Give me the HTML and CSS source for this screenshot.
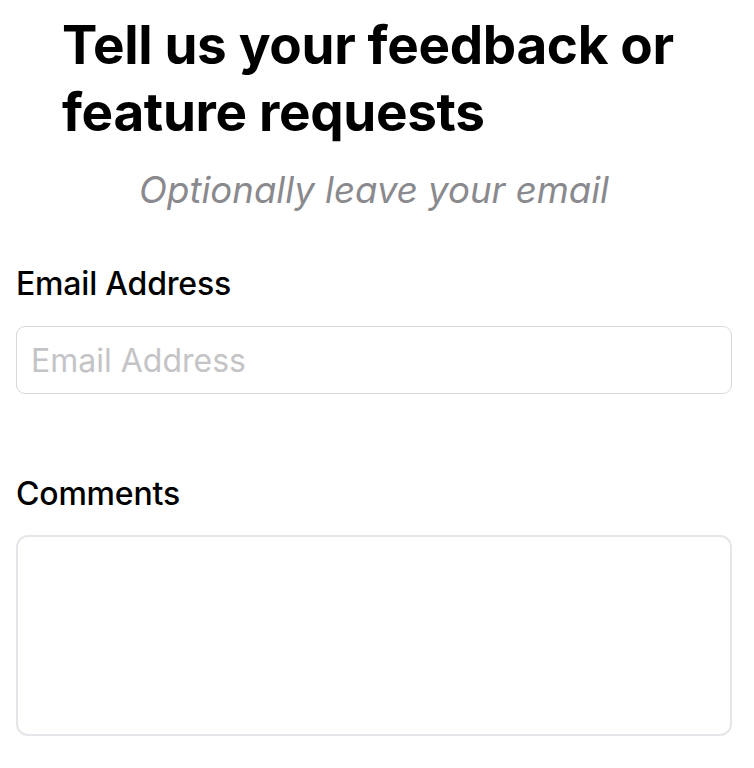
FILE: index.html
```html
<!DOCTYPE html>
<html>
<head>
<meta charset="utf-8">
<link rel="stylesheet" href="styles.css">
</head>
<body>
<div class="page">
  <h1 class="title">Tell us your feedback or feature requests</h1>
  <p class="subtitle">Optionally leave your email</p>
  <div class="field">
    <label class="label" for="email">Email Address</label>
    <input class="input" id="email" type="text" placeholder="Email Address">
  </div>
  <div class="field field-comments">
    <label class="label" for="comments">Comments</label>
    <textarea class="textarea" id="comments"></textarea>
  </div>
</div>
</body>
</html>
```

FILE: styles.css
```css
html, body {
  margin: 0;
  padding: 0;
  background: #ffffff;
}
body {
  font-family: Inter, "Liberation Sans", sans-serif;
  color: #000;
}
.page {
  padding: 12px 22px 0 16px;
}
.title {
  margin: 0;
  padding: 0 30px 0 46px;
  font-size: 53px;
  line-height: 67px;
  font-weight: 700;
  letter-spacing: -0.33px;
}
.subtitle {
  margin: 22px 0 0 0;
  text-align: center;
  font-style: italic;
  font-size: 36.6px;
  line-height: 44px;
  font-weight: 400;
  color: #8a8a8e;
}
.field {
  display: flex;
  flex-direction: column;
}
.label {
  margin-top: 54px;
  font-size: 32px;
  line-height: 36px;
  font-weight: 500;
  letter-spacing: -0.2px;
}
.input {
  margin-top: 24px;
  height: 68px;
  box-sizing: border-box;
  border: 1px solid #d9d9d9;
  border-radius: 9px;
  padding: 0 14px;
  font-family: inherit;
  font-size: 32px;
  outline: none;
}
.input::placeholder {
  color: #c4c4c7;
}
.field-comments .label {
  margin-top: 82px;
}
.textarea {
  margin-top: 23px;
  height: 201px;
  box-sizing: border-box;
  border: 2px solid #e6e6ea;
  border-radius: 12px;
  resize: none;
  font-family: inherit;
  font-size: 30px;
  outline: none;
}
```
